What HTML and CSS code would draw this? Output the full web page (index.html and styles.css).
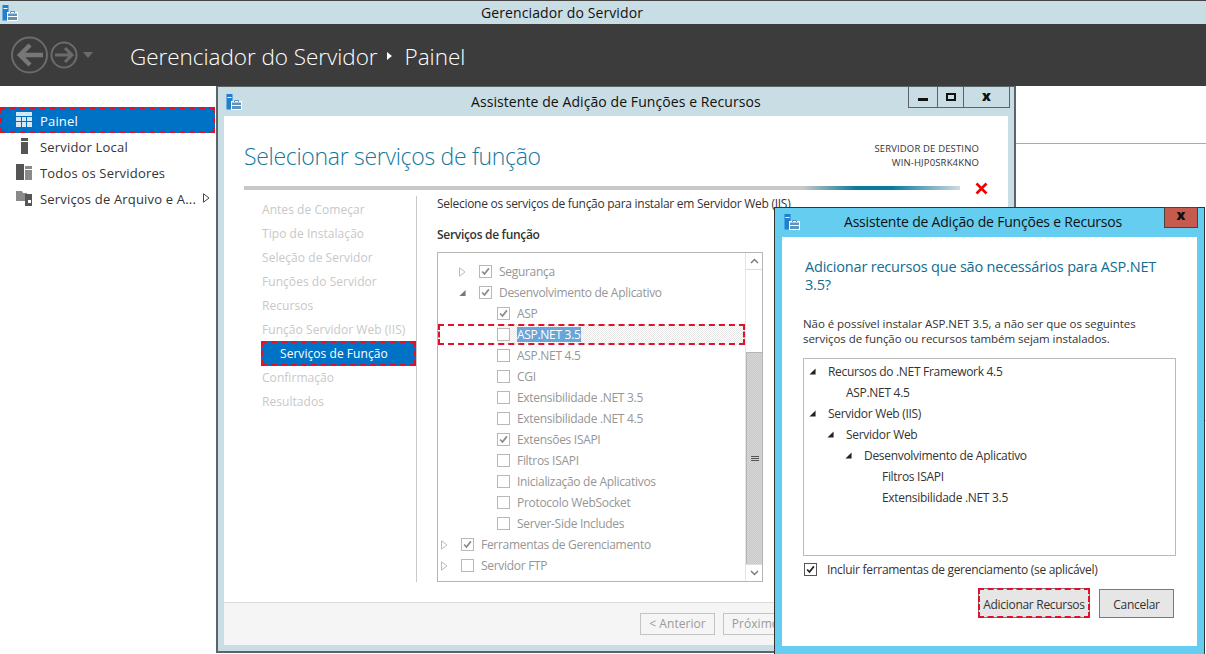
FILE: index.html
```html
<!DOCTYPE html>
<html lang="pt-BR">
<head>
    <meta charset="UTF-8">
    <meta name="viewport" content="width=device-width, initial-scale=1.0">
    <title>Gerenciador do Servidor</title>
    <link rel="stylesheet" href="styles.css">
</head>
<body>

<svg class="defs" width="0" height="0">
    <symbol id="app-icon" viewBox="0 0 16 16">
        <rect x="0.5" y="0" width="6" height="15.5" fill="#1f7fd0"/>
        <rect x="1.5" y="3" width="4" height="1" fill="#fff"/>
        <rect x="5" y="7" width="11" height="9" fill="#fff"/>
        <rect x="6" y="8.5" width="9" height="6.5" fill="#5d93bd"/>
        <rect x="6" y="11" width="9" height="1" fill="#fff"/>
        <path d="M8.5 8V6.5h4V8" fill="none" stroke="#5d93bd"/>
    </symbol>
    <symbol id="tick" viewBox="0 0 13 13">
        <path d="M2.5 6.5 5.3 9.5 10.5 2.8" fill="none" stroke="currentColor" stroke-width="2"/>
    </symbol>
    <symbol id="arrow-closed" viewBox="0 0 7 10">
        <path d="M0.5 0.8 6 5 0.5 9.2Z" fill="#fff" stroke="currentColor"/>
    </symbol>
    <symbol id="arrow-open" viewBox="0 0 8 8">
        <path d="M7.5 0.5V7.5H0.5Z" fill="currentColor"/>
    </symbol>
</svg>

<div class="app">
    <div class="titlebar">
        <svg class="app-icon"><use href="#app-icon"/></svg>
        <span class="titlebar-text">Gerenciador do Servidor</span>
    </div>

    <div class="header">
        <svg class="nav-icons" width="96" height="44" viewBox="0 0 96 44">
            <g fill="none" stroke="#6b6b6b">
                <circle cx="18.5" cy="22" r="17.5" stroke-width="2"/>
                <path d="M32 22H9M19 12 9 22 19 32" stroke="#777" stroke-width="4.5"/>
                <circle cx="53" cy="22" r="12.5" stroke-width="2"/>
                <path d="M44 22H61M54 15 61 22 54 29" stroke-width="3"/>
            </g>
            <path d="M72 19H82L77 25Z" fill="#6b6b6b"/>
        </svg>
        <div class="breadcrumb">
            <span>Gerenciador do Servidor</span>
            <i class="crumb-arrow"></i>
            <span>Painel</span>
        </div>
    </div>

    <div class="workspace">
        <ul class="sidebar">
            <li class="side-item active">
                <svg width="16" height="16" viewBox="0 0 16 16"><path d="M0 0H16V4H0ZM0 5H5V9H0ZM6 5H10V9H6ZM11 5H16V9H11ZM0 10H5V15H0ZM6 10H10V15H6ZM11 10H16V15H11Z" fill="#d5e6f5"/></svg>
                <span>Painel</span>
            </li>
            <li class="side-item">
                <svg width="16" height="16" viewBox="0 0 16 16"><path d="M5 0H12V3H5ZM5 4H12V16H5Z" fill="#555"/></svg>
                <span>Servidor Local</span>
            </li>
            <li class="side-item">
                <svg width="16" height="16" viewBox="0 0 16 16"><path d="M0 0H8V16H0Z" fill="#555"/><path d="M9 2H16V5H9ZM9 6H16V16H9Z" fill="#8a8a8a"/></svg>
                <span>Todos os Servidores</span>
            </li>
            <li class="side-item">
                <svg width="16" height="16" viewBox="0 0 16 16"><path d="M0 1H6L7 3H11V11H0Z" fill="#8a8a8a"/><path d="M9 4H16V16H9Z" fill="#555"/><path d="M12 10h3v3h-3z" fill="#fff"/></svg>
                <span>Serviços de Arquivo e A...</span>
                <svg class="side-more" width="7" height="10"><use href="#arrow-closed"/></svg>
            </li>
        </ul>
        <div class="pane">
            <div class="pane-top"></div>
            <div class="pane-mid"></div>
        </div>
    </div>

    <div class="window wizard">
        <div class="win-title">
            <svg class="app-icon"><use href="#app-icon"/></svg>
            <span class="win-title-text">Assistente de Adição de Funções e Recursos</span>
            <div class="win-buttons">
                <span class="win-btn btn-min"><i></i></span>
                <span class="win-btn btn-max"><i></i></span>
                <span class="win-btn btn-close">x</span>
            </div>
        </div>

        <div class="win-body">
            <div class="wizard-top">
                <h1>Selecionar serviços de função</h1>
                <div class="dest">SERVIDOR DE DESTINO<br>WIN-HJP0SRK4KNO</div>
            </div>
            <div class="progress-row">
                <div class="progress"></div>
                <svg width="13" height="13" viewBox="0 0 13 13"><path d="M1.5 1.5 11.5 11.5M11.5 1.5 1.5 11.5" stroke="#f00000" stroke-width="2.6"/></svg>
            </div>

            <div class="wizard-main">
                <ul class="steps">
                    <li>Antes de Começar</li>
                    <li>Tipo de Instalação</li>
                    <li>Seleção de Servidor</li>
                    <li>Funções do Servidor</li>
                    <li>Recursos</li>
                    <li>Função Servidor Web (IIS)</li>
                    <li class="current">Serviços de Função</li>
                    <li>Confirmação</li>
                    <li>Resultados</li>
                </ul>
                <div class="roles">
                    <p class="roles-intro">Selecione os serviços de função para instalar em Servidor Web (IIS)</p>
                    <h2>Serviços de função</h2>
                    <div class="role-box">
                        <div class="role-list">
                            <div class="role lvl1"><svg class="tw"><use href="#arrow-closed"/></svg><span class="cb on"><svg><use href="#tick"/></svg></span>Segurança</div>
                            <div class="role lvl1"><svg class="tw open"><use href="#arrow-open"/></svg><span class="cb on"><svg><use href="#tick"/></svg></span>Desenvolvimento de Aplicativo</div>
                            <div class="role lvl2"><span class="cb on"><svg><use href="#tick"/></svg></span>ASP</div>
                            <div class="role lvl2 picked"><span class="cb"></span><span class="picked-text">ASP.NET 3.5</span></div>
                            <div class="role lvl2"><span class="cb"></span>ASP.NET 4.5</div>
                            <div class="role lvl2"><span class="cb"></span>CGI</div>
                            <div class="role lvl2"><span class="cb"></span>Extensibilidade .NET 3.5</div>
                            <div class="role lvl2"><span class="cb"></span>Extensibilidade .NET 4.5</div>
                            <div class="role lvl2"><span class="cb on"><svg><use href="#tick"/></svg></span>Extensões ISAPI</div>
                            <div class="role lvl2"><span class="cb"></span>Filtros ISAPI</div>
                            <div class="role lvl2"><span class="cb"></span>Inicialização de Aplicativos</div>
                            <div class="role lvl2"><span class="cb"></span>Protocolo WebSocket</div>
                            <div class="role lvl2"><span class="cb"></span>Server-Side Includes</div>
                            <div class="role lvl0"><svg class="tw"><use href="#arrow-closed"/></svg><span class="cb on"><svg><use href="#tick"/></svg></span>Ferramentas de Gerenciamento</div>
                            <div class="role lvl0"><svg class="tw"><use href="#arrow-closed"/></svg><span class="cb"></span>Servidor FTP</div>
                        </div>
                        <div class="scrollbar">
                            <span class="sb-btn">
                                <svg width="9" height="6" viewBox="0 0 9 6"><path d="M1 5 4.5 1.5 8 5" fill="none" stroke="#777" stroke-width="1.4"/></svg>
                            </span>
                            <div class="sb-track">
                                <div class="sb-thumb"><i></i><i></i><i></i></div>
                            </div>
                            <span class="sb-btn">
                                <svg width="9" height="6" viewBox="0 0 9 6"><path d="M1 1 4.5 4.5 8 1" fill="none" stroke="#777" stroke-width="1.4"/></svg>
                            </span>
                        </div>
                    </div>
                </div>
            </div>

            <div class="wizard-footer">
                <span class="wiz-btn">&lt; Anterior</span>
                <span class="wiz-btn">Próximo &gt;</span>
            </div>
        </div>
    </div>

    <div class="window dialog">
        <div class="dlg-title">
            <svg class="app-icon"><use href="#app-icon"/></svg>
            <span class="dlg-title-text">Assistente de Adição de Funções e Recursos</span>
            <span class="dlg-close">x</span>
        </div>
        <div class="dlg-body">
            <h3>Adicionar recursos que são necessários para ASP.NET 3.5?</h3>
            <p class="dlg-text">Não é possível instalar ASP.NET 3.5, a não ser que os seguintes<br>serviços de função ou recursos também sejam instalados.</p>
            <div class="dep-box">
                <div class="dep dep0"><svg class="tw"><use href="#arrow-open"/></svg>Recursos do .NET Framework 4.5</div>
                <div class="dep dep1"><span class="tw"></span>ASP.NET 4.5</div>
                <div class="dep dep0"><svg class="tw"><use href="#arrow-open"/></svg>Servidor Web (IIS)</div>
                <div class="dep dep1"><svg class="tw"><use href="#arrow-open"/></svg>Servidor Web</div>
                <div class="dep dep2"><svg class="tw"><use href="#arrow-open"/></svg>Desenvolvimento de Aplicativo</div>
                <div class="dep dep3"><span class="tw"></span>Filtros ISAPI</div>
                <div class="dep dep3"><span class="tw"></span>Extensibilidade .NET 3.5</div>
            </div>
            <div class="include">
                <span class="cb on"><svg><use href="#tick"/></svg></span>
                Incluir ferramentas de gerenciamento (se aplicável)
            </div>
            <div class="dlg-actions">
                <span class="dlg-btn primary">Adicionar Recursos</span>
                <span class="dlg-btn">Cancelar</span>
            </div>
        </div>
    </div>
</div>

</body>
</html>
```

FILE: styles.css
```css
* {
    box-sizing: border-box;
}

body {
    margin: 0;
    background-color: white;
    font-family: "Open Sans", "Noto Sans", sans-serif;
    color: #222;
    overflow: hidden;
}

ul {
    list-style: none;
    margin: 0;
    padding: 0;
}

.defs {
    position: absolute;
}

.app {
    position: relative;
    width: 1206px;
    height: 654px;
    overflow: hidden;
    display: flex;
    flex-direction: column;
}

.app-icon {
    width: 16px;
    height: 16px;
    flex: none;
}

/* top of the server manager */
.titlebar {
    height: 24px;
    background: repeating-conic-gradient(#c6dae1 0 25%, #cedfe5 0 50%) 0 0 / 2px 2px;
    border-top: 1px solid #444;
    display: flex;
    align-items: center;
    padding-left: 2px;
}

.titlebar-text {
    margin-left: 463px;
    font-size: 14px;
    letter-spacing: 0.1px;
    color: #111;
}

.header {
    height: 62px;
    background-color: #3c3c3c;
    display: flex;
    align-items: center;
    padding-left: 11px;
}

.nav-icons {
    flex: none;
    margin-top: -1px;
}

.breadcrumb {
    margin-left: 23px;
    margin-top: 2px;
    color: white;
    font-size: 22.5px;
    font-weight: 300;
    letter-spacing: -0.04px;
    display: flex;
    align-items: center;
}

.crumb-arrow {
    width: 0;
    height: 0;
    margin: 0 13px 0 9px;
    border-left: 5px solid white;
    border-top: 4px solid transparent;
    border-bottom: 4px solid transparent;
}

.workspace {
    flex: 1;
    display: flex;
}

.sidebar {
    width: 216px;
    flex: none;
    padding-top: 21px;
}

.side-item {
    height: 26px;
    display: flex;
    align-items: center;
    padding-left: 16px;
    font-size: 13px;
    letter-spacing: 0.18px;
    color: #333;
}

.side-item span {
    margin-top: 2px;
}

.side-item > svg:first-child {
    margin-right: 8px;
    flex: none;
}

.side-item.active {
    width: 215px;
    background-color: #0072c6;
    color: white;
    outline: 2px dashed #e3102c;
    outline-offset: -2px;
}

.side-more {
    margin-left: auto;
    margin-right: 6px;
    color: #444;
}

.pane {
    flex: 1;
}

.pane-top {
    height: 58px;
    border-bottom: 1px solid #aaa;
}

.pane-mid {
    height: 277px;
    border-bottom: 1px solid #ccc;
}

/* windows on the desktop */
.window {
    position: absolute;
    display: flex;
    flex-direction: column;
}

.wizard {
    left: 216px;
    top: 86px;
    width: 800px;
    height: 567px;
    background: repeating-conic-gradient(#c6dae1 0 25%, #cedfe5 0 50%) 0 0 / 2px 2px;
    border: 1px solid #5b6468;
    border-width: 1px 2px 2px 2px;
    padding: 0 6px 6px 6px;
}

.win-title {
    height: 29px;
    flex: none;
    display: flex;
    align-items: center;
    position: relative;
    margin-left: 2px;
}

.win-title-text {
    margin-left: 229px;
    font-size: 14px;
    letter-spacing: 0.08px;
    color: #111;
}

.win-buttons {
    position: absolute;
    top: 0;
    right: -2px;
    height: 21px;
    display: flex;
    border: 1px solid #5b6468;
    border-top: none;
}

.win-btn {
    height: 20px;
    display: flex;
    align-items: center;
    justify-content: center;
    border-left: 1px solid #5b6468;
    color: #111;
}

.win-btn:first-child {
    border-left: none;
}

.btn-min {
    width: 28px;
}

.btn-min i {
    width: 10px;
    height: 3px;
    margin-top: 5px;
    background-color: #111;
}

.btn-max {
    width: 26px;
}

.btn-max i {
    width: 10px;
    height: 8px;
    border: 2px solid #111;
}

.btn-close {
    width: 46px;
    font-weight: 800;
    font-size: 14px;
    padding-bottom: 3px;
}

.win-body {
    flex: 1;
    background-color: white;
    display: flex;
    flex-direction: column;
    min-height: 0;
}

.wizard-top {
    height: 67px;
    flex: none;
    display: flex;
    justify-content: space-between;
    padding: 25px 29px 0 20px;
}

h1 {
    margin: 0;
    font-size: 23px;
    font-weight: 300;
    line-height: 30px;
    letter-spacing: -0.3px;
    color: #15789c;
}

.dest {
    font-size: 9.5px;
    line-height: 14px;
    letter-spacing: 0.15px;
    text-align: right;
    color: #333;
    margin-top: 1px;
}

.progress-row {
    height: 10px;
    flex: none;
    display: flex;
    align-items: center;
    padding-left: 20px;
}

.progress-row svg {
    margin-left: 15px;
}

.progress {
    width: 716px;
    height: 4px;
    background: linear-gradient(to right, #c8c8c8 78%, #0a7b9c 85.5%, #0a7b9c 90.5%, #d0dadd 100%);
}

.wizard-main {
    flex: 1;
    display: flex;
    min-height: 0;
    padding-left: 38px;
    margin-top: 3px;
}

.steps {
    width: 155px;
    flex: none;
    height: 386px;
    padding-top: 2px;
    border-right: 1px solid #c8c8c8;
    margin-right: 20px;
    font-size: 12px;
    letter-spacing: 0.05px;
    color: #c8c8c8;
}

.steps li {
    height: 24px;
    line-height: 24px;
    white-space: nowrap;
}

.steps .current {
    margin: -1px 0 0 -1px;
    width: 155px;
    height: 25px;
    line-height: 26px;
    padding-left: 19px;
    color: white;
    background-color: #0072c6;
    outline: 2px dashed #e3102c;
    outline-offset: -2px;
}

.roles {
    width: 326px;
}

.roles-intro {
    margin: 0;
    font-size: 12px;
    line-height: 16px;
    letter-spacing: -0.28px;
    white-space: nowrap;
    color: #333;
}

h2 {
    margin: 14px 0 0 0;
    font-size: 12px;
    line-height: 18px;
    letter-spacing: -0.3px;
    font-weight: 600;
    color: #333;
}

.role-box {
    margin-top: 8px;
    height: 330px;
    display: flex;
    border: 1px solid #b5b5b5;
}

.role-list {
    flex: 1;
    padding-top: 8px;
}

.role {
    height: 21px;
    display: flex;
    align-items: center;
    font-size: 12px;
    letter-spacing: -0.3px;
    color: #969696;
    white-space: nowrap;
}

.lvl0 {
    padding-left: 3px;
}

.lvl1 {
    padding-left: 21px;
}

.lvl2 {
    padding-left: 59px;
}

.tw {
    width: 7px;
    height: 10px;
    margin-right: 13px;
    flex: none;
    color: #bbb;
}

.tw.open {
    color: #777;
}

.cb {
    width: 13px;
    height: 13px;
    flex: none;
    margin-right: 7px;
    border: 1px solid #b8b8b8;
    background-color: white;
    color: #8a8a8a;
    display: flex;
}

.cb svg {
    width: 11px;
    height: 11px;
}

.picked {
    position: relative;
    background: repeating-conic-gradient(#e8e8e8 0 25%, white 0 50%) 37px 0 / 2px 2px no-repeat;
    background-size: 2px 2px;
    background-repeat: repeat;
    background-clip: content-box;
    padding-left: 59px;
}

.picked::before {
    content: "";
    position: absolute;
    left: 0;
    top: 0;
    bottom: 0;
    width: 37px;
    background-color: white;
}

.picked::after {
    content: "";
    position: absolute;
    inset: 0;
    outline: 2px dashed #e3102c;
    outline-offset: -2px;
}

.picked-text {
    background-color: #6aa5d8;
    color: white;
    line-height: 15px;
}

.scrollbar {
    width: 17px;
    flex: none;
    display: flex;
    flex-direction: column;
    border-left: 1px solid #e4e4e4;
    background-color: white;
}

.sb-btn {
    height: 17px;
    flex: none;
    display: flex;
    align-items: center;
    justify-content: center;
    border-bottom: 1px solid #ddd;
}

.sb-btn:last-child {
    border-bottom: none;
    border-top: 1px solid #ddd;
}

.sb-track {
    flex: 1;
    padding-top: 82px;
    display: flex;
}

.sb-thumb {
    flex: 1;
    background: repeating-conic-gradient(#c8c8c8 0 25%, #d8d8d8 0 50%) 0 0 / 2px 2px;
    border: 1px solid #b5b5b5;
    border-width: 1px 0 0 1px;
    display: flex;
    flex-direction: column;
    align-items: center;
    justify-content: center;
    gap: 1px;
}

.sb-thumb i {
    width: 8px;
    height: 1px;
    background-color: #555;
}

.wizard-footer {
    height: 43px;
    flex: none;
    background-color: #f5f5f5;
    border-top: 1px solid #dcdcdc;
    display: flex;
    gap: 8px;
    padding: 10px 0 0 416px;
}

.wiz-btn {
    width: 75px;
    height: 22px;
    border: 1px solid #c4c4c4;
    font-size: 12px;
    line-height: 20px;
    letter-spacing: 0.05px;
    text-align: center;
    color: #9a9a9a;
    white-space: nowrap;
}

/* the dialog on top */
.dialog {
    left: 774px;
    top: 207px;
    width: 431px;
    height: 448px;
    background-color: #64cdf0;
    border: 1px solid #333;
    padding: 0 7px 8px 7px;
}

.dlg-title {
    height: 29px;
    flex: none;
    display: flex;
    align-items: center;
    position: relative;
    margin-left: 2px;
    padding-bottom: 2px;
}

.dlg-title-text {
    margin-left: 44px;
    font-size: 14px;
    letter-spacing: -0.2px;
    color: #111;
}

.dlg-close {
    position: absolute;
    top: -1px;
    right: -1px;
    width: 34px;
    height: 21px;
    background-color: #c75a4e;
    border: 1px solid #444;
    font-size: 14px;
    font-weight: 800;
    line-height: 14px;
    text-align: center;
    color: #111;
}

.dlg-body {
    flex: 1;
    background-color: white;
    padding: 21px 21px 0 21px;
}

h3 {
    margin: 0 0 0 2px;
    font-size: 14.5px;
    font-weight: 400;
    line-height: 18px;
    letter-spacing: -0.2px;
    color: #0f6d92;
}

.dlg-text {
    margin: 22px 0 0 0;
    font-size: 11.5px;
    line-height: 15px;
    letter-spacing: -0.05px;
    color: #333;
    white-space: nowrap;
}

.dep-box {
    margin-top: 12px;
    height: 198px;
    border: 1px solid #bbb;
    padding-top: 2px;
}

.dep {
    height: 21px;
    display: flex;
    align-items: center;
    font-size: 12px;
    letter-spacing: -0.3px;
    color: #333;
    white-space: nowrap;
}

.dep .tw {
    width: 7px;
    height: 7px;
    margin-right: 12px;
    color: #222;
}

.dep0 {
    padding-left: 5px;
}

.dep1 {
    padding-left: 23px;
}

.dep2 {
    padding-left: 41px;
}

.dep3 {
    padding-left: 59px;
}

.include {
    margin-top: 6px;
    height: 14px;
    display: flex;
    align-items: center;
    font-size: 12px;
    letter-spacing: -0.3px;
    color: #333;
}

.include .cb {
    margin-left: 1px;
    margin-right: 10px;
    border-color: #555;
    color: #222;
}

.dlg-actions {
    margin-top: 12px;
    margin-right: 2px;
    display: flex;
    justify-content: flex-end;
    align-items: flex-end;
    gap: 9px;
}

.dlg-btn {
    width: 75px;
    height: 29px;
    background-color: #e6e6e6;
    border: 1px solid #7a7a7a;
    font-size: 12px;
    line-height: 29px;
    letter-spacing: -0.3px;
    text-align: center;
    color: #333;
    white-space: nowrap;
}

.dlg-btn.primary {
    width: 112px;
    height: 30px;
    line-height: 31px;
    outline: 2px dashed #e3102c;
    outline-offset: -2px;
}
```
